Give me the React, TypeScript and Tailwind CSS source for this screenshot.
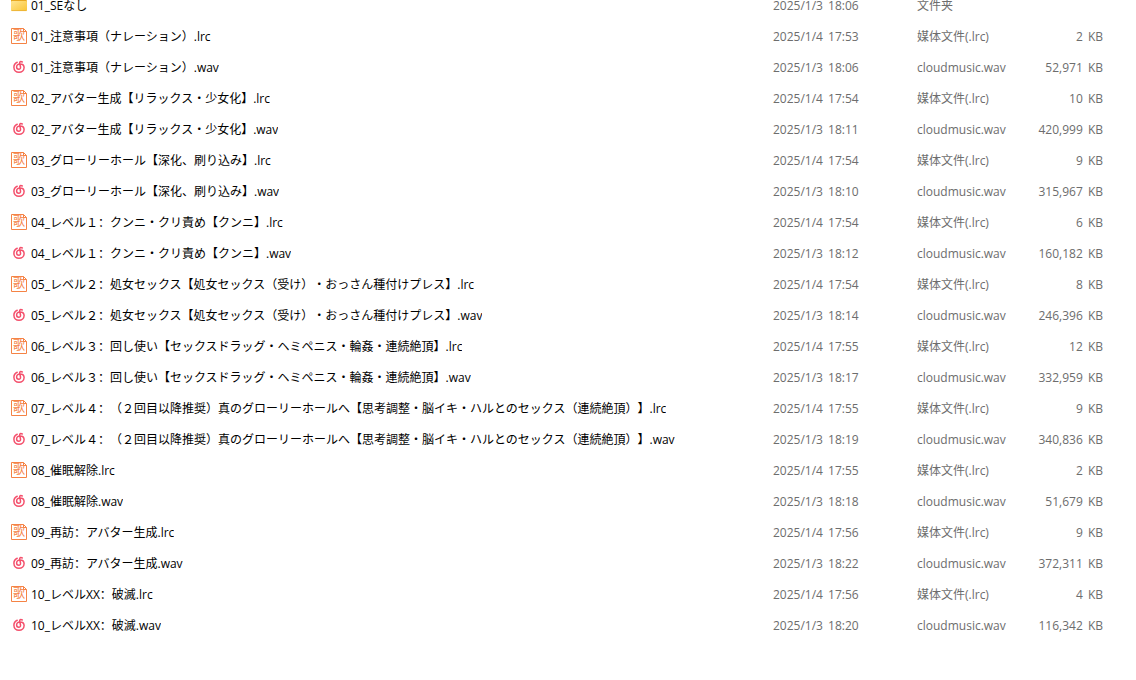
type Kind = "folder" | "lrc" | "wav";

interface Entry {
  name: string;
  kind: Kind;
  modified: string;
  size?: string;
}

const entries: Entry[] = [
  { name: "01_SEなし", kind: "folder", modified: "2025/1/3 18:06" },
  { name: "01_注意事項（ナレーション）.lrc", kind: "lrc", modified: "2025/1/4 17:53", size: "2 KB" },
  { name: "01_注意事項（ナレーション）.wav", kind: "wav", modified: "2025/1/3 18:06", size: "52,971 KB" },
  { name: "02_アバター生成【リラックス・少女化】.lrc", kind: "lrc", modified: "2025/1/4 17:54", size: "10 KB" },
  { name: "02_アバター生成【リラックス・少女化】.wav", kind: "wav", modified: "2025/1/3 18:11", size: "420,999 KB" },
  { name: "03_グローリーホール【深化、刷り込み】.lrc", kind: "lrc", modified: "2025/1/4 17:54", size: "9 KB" },
  { name: "03_グローリーホール【深化、刷り込み】.wav", kind: "wav", modified: "2025/1/3 18:10", size: "315,967 KB" },
  { name: "04_レベル１：クンニ・クリ責め【クンニ】.lrc", kind: "lrc", modified: "2025/1/4 17:54", size: "6 KB" },
  { name: "04_レベル１：クンニ・クリ責め【クンニ】.wav", kind: "wav", modified: "2025/1/3 18:12", size: "160,182 KB" },
  { name: "05_レベル２：処女セックス【処女セックス（受け）・おっさん種付けプレス】.lrc", kind: "lrc", modified: "2025/1/4 17:54", size: "8 KB" },
  { name: "05_レベル２：処女セックス【処女セックス（受け）・おっさん種付けプレス】.wav", kind: "wav", modified: "2025/1/3 18:14", size: "246,396 KB" },
  { name: "06_レベル３：回し使い【セックスドラッグ・ヘミペニス・輪姦・連続絶頂】.lrc", kind: "lrc", modified: "2025/1/4 17:55", size: "12 KB" },
  { name: "06_レベル３：回し使い【セックスドラッグ・ヘミペニス・輪姦・連続絶頂】.wav", kind: "wav", modified: "2025/1/3 18:17", size: "332,959 KB" },
  { name: "07_レベル４：（２回目以降推奨）真のグローリーホールへ【思考調整・脳イキ・ハルとのセックス（連続絶頂）】.lrc", kind: "lrc", modified: "2025/1/4 17:55", size: "9 KB" },
  { name: "07_レベル４：（２回目以降推奨）真のグローリーホールへ【思考調整・脳イキ・ハルとのセックス（連続絶頂）】.wav", kind: "wav", modified: "2025/1/3 18:19", size: "340,836 KB" },
  { name: "08_催眠解除.lrc", kind: "lrc", modified: "2025/1/4 17:55", size: "2 KB" },
  { name: "08_催眠解除.wav", kind: "wav", modified: "2025/1/3 18:18", size: "51,679 KB" },
  { name: "09_再訪：アバター生成.lrc", kind: "lrc", modified: "2025/1/4 17:56", size: "9 KB" },
  { name: "09_再訪：アバター生成.wav", kind: "wav", modified: "2025/1/3 18:22", size: "372,311 KB" },
  { name: "10_レベルXX：破滅.lrc", kind: "lrc", modified: "2025/1/4 17:56", size: "4 KB" },
  { name: "10_レベルXX：破滅.wav", kind: "wav", modified: "2025/1/3 18:20", size: "116,342 KB" },
];

const typeLabels: Record<Kind, string> = {
  folder: "文件夹",
  lrc: "媒体文件(.lrc)",
  wav: "cloudmusic.wav",
};

function FolderIcon() {
  return (
    <svg viewBox="0 0 16 16" className="size-4" aria-hidden="true">
      <defs>
        <linearGradient id="folder-front" x1="0" y1="0" x2="1" y2="1">
          <stop offset="0" stopColor="#ffe592" />
          <stop offset="1" stopColor="#fac535" />
        </linearGradient>
      </defs>
      <path d="M0 2a1 1 0 0 1 1-1h4.6L7.5 3H15a1 1 0 0 1 1 1v7H0z" fill="#e9a820" />
      <path d="M0 5a1 1 0 0 1 1-1h14a1 1 0 0 1 1 1v8a1 1 0 0 1-1 1H1a1 1 0 0 1-1-1z" fill="url(#folder-front)" />
      <path d="M0.5 13.6h15" stroke="#e8af31" strokeWidth="0.8" />
    </svg>
  );
}

function LyricIcon() {
  return (
    <svg viewBox="0 0 16 16" className="size-4" aria-hidden="true">
      <path d="M0.5 0.5h12l3 3v12h-15z M12.5 0.5v3h3" fill="#fff" stroke="#f58345" />
      <text x="8" y="12" textAnchor="middle" fill="#f58345" className="font-['Noto_Sans_CJK_SC',sans-serif] text-[12px]">
        歌
      </text>
    </svg>
  );
}

function MusicIcon() {
  return (
    <svg viewBox="0 0 16 16" className="size-4" fill="none" stroke="#f4506c" strokeWidth="1.5" strokeLinecap="round" aria-hidden="true">
      <path d="M6.2 3.2C4.2 4 2.9 5.9 2.9 8.3c0 2.9 2.2 5 5.1 5s5.1-2.1 5.1-4.7c0-2.2-1.6-3.7-4.1-3.7-2 0-3.4 1.3-3.4 3.2 0 1.3.9 2.2 2.1 2.2 1.3 0 2.1-1 1.8-2.3L8.700 4.200C8.400 2.900 9.500 2.100 11.300 3" />
    </svg>
  );
}

function EntryIcon({ kind }: { kind: Kind }) {
  if (kind === "folder") return <FolderIcon />;
  if (kind === "lrc") return <LyricIcon />;
  return <MusicIcon />;
}

/** Two words set a little further apart than the font's own space. */
function Pair({ value }: { value: string }) {
  const [first, second] = value.split(" ");
  return (
    <>
      <span className="mr-0.5">{first}</span> {second}
    </>
  );
}

export default function App() {
  return (
    <main className="min-h-screen overflow-hidden bg-white pr-[33px] pl-[11px] font-['Open_Sans','Noto_Sans_CJK_SC',sans-serif] text-xs text-[#6d6d6d] [text-spacing-trim:space-all]">
      <table className="-mt-2.5 w-full table-fixed border-collapse whitespace-nowrap">
        <colgroup>
          <col />
          <col className="w-36" />
          <col className="w-28" />
          <col className="w-[74px]" />
        </colgroup>
        <tbody>
          {entries.map((entry) => (
            <tr key={entry.name} className="h-[31px]">
              <td className="p-0">
                <div className="flex items-start gap-1">
                  <span className="shrink-0">
                    <EntryIcon kind={entry.kind} />
                  </span>
                  <span className="truncate pt-px text-black">{entry.name}</span>
                </div>
              </td>
              <td className="p-0">
                <Pair value={entry.modified} />
              </td>
              <td className="p-0">{typeLabels[entry.kind]}</td>
              <td className="p-0 text-right">{entry.size && <Pair value={entry.size} />}</td>
            </tr>
          ))}
        </tbody>
      </table>
    </main>
  );
}
